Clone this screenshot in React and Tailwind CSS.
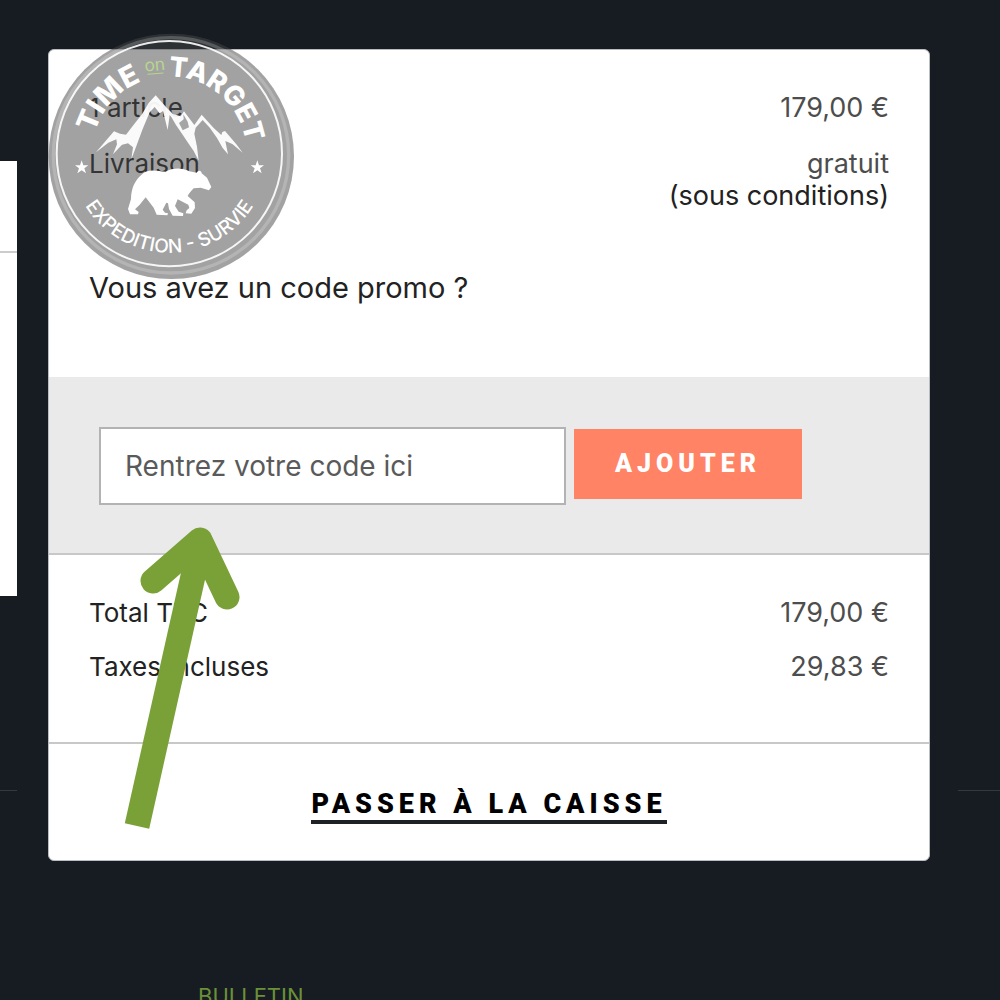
import React from 'react';

const LOGO_FONT = 'Inter, "Open Sans", sans-serif';
const STAR = 'M0 -21 L5 -6 L20 -6 L8 3 L13 18 L0 9 L-13 18 L-8 3 L-20 -6 L-5 -6 Z';

const Logo = () => (
  <svg
    className="absolute -top-[17px] -left-px w-[247px] h-[247px] pointer-events-none"
    viewBox="24 24 741 741"
    role="img"
    aria-label="Time on Target, expedition - survie"
  >
    <defs>
      <path id="arc-top" d="M156 386 A232 232 0 0 1 620 386" />
      <path id="arc-bottom" d="M91 386 A297 297 0 0 0 685 386" />
    </defs>
    <circle cx="394" cy="394" r="368" fill="#464646" fillOpacity="0.5" />
    <circle cx="393" cy="391" r="353" fill="none" stroke="#fff" strokeOpacity="0.2" strokeWidth="10" />
    <circle cx="388" cy="386" r="338" fill="none" stroke="#fff" strokeOpacity="0.9" strokeWidth="6" />

    <g fill="#fff" fontFamily={LOGO_FONT}>
      <text fontSize="86" fontWeight="800">
        <textPath href="#arc-top" startOffset="62">TIME</textPath>
      </text>
      <text fontSize="82" fontWeight="800">
        <textPath href="#arc-top" startOffset="362">TARGET</textPath>
      </text>
      <text fontSize="57" fontWeight="500">
        <textPath href="#arc-bottom" startOffset="50%" textAnchor="middle">EXPEDITION - SURVIE</textPath>
      </text>
      <path transform="translate(125 427)" d={STAR} />
      <path transform="translate(652 427)" d={STAR} />
    </g>

    <g transform="rotate(-5 345 130)">
      <text x="345" y="137" fontSize="52" textAnchor="middle" fill="#b5d68d" fontFamily={LOGO_FONT}>on</text>
      <path d="M321 146 H369" stroke="#b5d68d" strokeWidth="3" />
    </g>

    {/* Montagnes */}
    <g fill="#fff" fillOpacity="0.94">
      <path d="M347 211 L326 234 L306 268 L281 299 L258 329 L240 326 L222 319 L202 342 L168 382 L205 353 L229 343 L231 358 L219 388 L246 359 L264 355 L279 367 L274 403 L288 366 L308 312 L329 262 L344 246 L359 265 L369 258 L383 315 L389 270 L394 276 L408 300 L429 331 L446 356 L461 378 L476 407 L471 365 L463 326 L467 308 L488 285 L510 309 L531 339 L548 369 L564 388 L556 348 L577 357 L608 383 L589 358 L555 318 L547 321 L544 330 L521 309 L485 269 L463 300 L432 259 L422 274 L399 267 L378 246 Z" />
      <path d="M430 268 L443 290 L447 307 L428 316 L417 294 L431 283 Z" fill="#9f9f9f" />
    </g>

    {/* Ours */}
    <path
      fill="#fff"
      d="M307 447 C325 430 351 438 377 440 C398 429 423 427 448 439 L470 443 C476 434 484 436 485 445 L501 458 L514 486 L507 496 L482 488 L461 490 C452 500 446 507 443 513 L464 532 L465 549 L454 566 L437 565 L440 556 L448 549 L445 539 L413 523 L405 543 L416 560 L430 565 L429 573 L398 572 L387 552 L384 535 L379 533 L368 554 L375 563 L384 565 L382 571 L350 569 L341 548 L317 517 L299 539 L285 553 L296 561 L294 568 L270 568 L264 552 L273 522 C274 490 284 466 307 447 Z"
    />
  </svg>
);

const Arrow = () => (
  <svg
    className="absolute left-[69px] top-[477px] w-[130px] h-[302px] pointer-events-none"
    viewBox="118 527 130 302"
    fill="none"
    stroke="#7aa137"
    strokeWidth="25"
    aria-hidden="true"
  >
    <path d="M137 826 L200 545" />
    <path d="M153 581 L200 540 L227 597" strokeLinecap="round" strokeLinejoin="round" />
  </svg>
);

const Row = ({ label, children }) => (
  <div className="flex justify-between items-start">
    <span className="text-[26px] text-[#222]">{label}</span>
    <span className="text-right text-[#4d4d4d]">{children}</span>
  </div>
);

const App = () => {
  return (
    <div className="h-screen overflow-hidden bg-[#171c23] font-['Inter',sans-serif] text-[27px] leading-8">
      <main className="flex items-start pt-[49px]">
        {/* Bord du panier */}
        <div className="w-[17px] shrink-0 pt-28">
          <div className="bg-white h-[435px]">
            <div className="h-[92px] border-b-2 border-[#ccc]" />
          </div>
          <div className="h-[195px] border-b border-[#343941]" />
        </div>

        <section className="relative flex-1 ml-[31px] mr-7 bg-white rounded-md border border-[#b9bdc2]">
          <div className="px-10 pt-[42px] h-[327px] flex flex-col gap-6">
            <Row label="1 article">179,00 €</Row>
            <Row label="Livraison">
              gratuit
              <br />
              <span className="text-[#222]">(sous conditions)</span>
            </Row>
            <p className="mt-9 text-[29px] text-[#222]">Vous avez un code promo ?</p>
          </div>

          <form
            className="flex items-center gap-2 px-[50px] pt-[50px] pb-12 bg-[#eaeaea] border-b-2 border-[#c8c8c8]"
            onSubmit={(e) => e.preventDefault()}
          >
            <input
              type="text"
              aria-label="Code promo"
              placeholder="Rentrez votre code ici"
              className="w-[467px] h-[78px] px-6 text-[28px] bg-white border-2 border-[#b3b3b3] placeholder:text-[#5a5a5a] placeholder:opacity-100 outline-none"
            />
            <button
              type="submit"
              className="w-[228px] h-[70px] mb-1 bg-[#ff8364] text-white text-[25px] font-black font-['Roboto',sans-serif] tracking-[5px]"
            >
              AJOUTER
            </button>
          </form>

          <div className="px-10 pt-[42px] pb-[59px] flex flex-col gap-[22px] border-b-2 border-[#c8c8c8]">
            <Row label="Total TTC">179,00 €</Row>
            <Row label="Taxes incluses">29,83 €</Row>
          </div>

          <div className="flex justify-center pt-11 pb-9">
            <a
              href="#caisse"
              className="border-b-4 border-[#1e2126] text-black text-[27px] font-black font-['Roboto',sans-serif] tracking-[5px]"
            >
              PASSER À LA CAISSE
            </a>
          </div>

          <Logo />
          <Arrow />
        </section>

        <div className="w-[42px] shrink-0 h-[742px] border-b border-[#343941]" />
      </main>

      <footer className="pt-[119px] pl-[198px] text-[22px] text-[#6b9138]">
        <h2>BULLETIN</h2>
      </footer>
    </div>
  );
};

export default App;
